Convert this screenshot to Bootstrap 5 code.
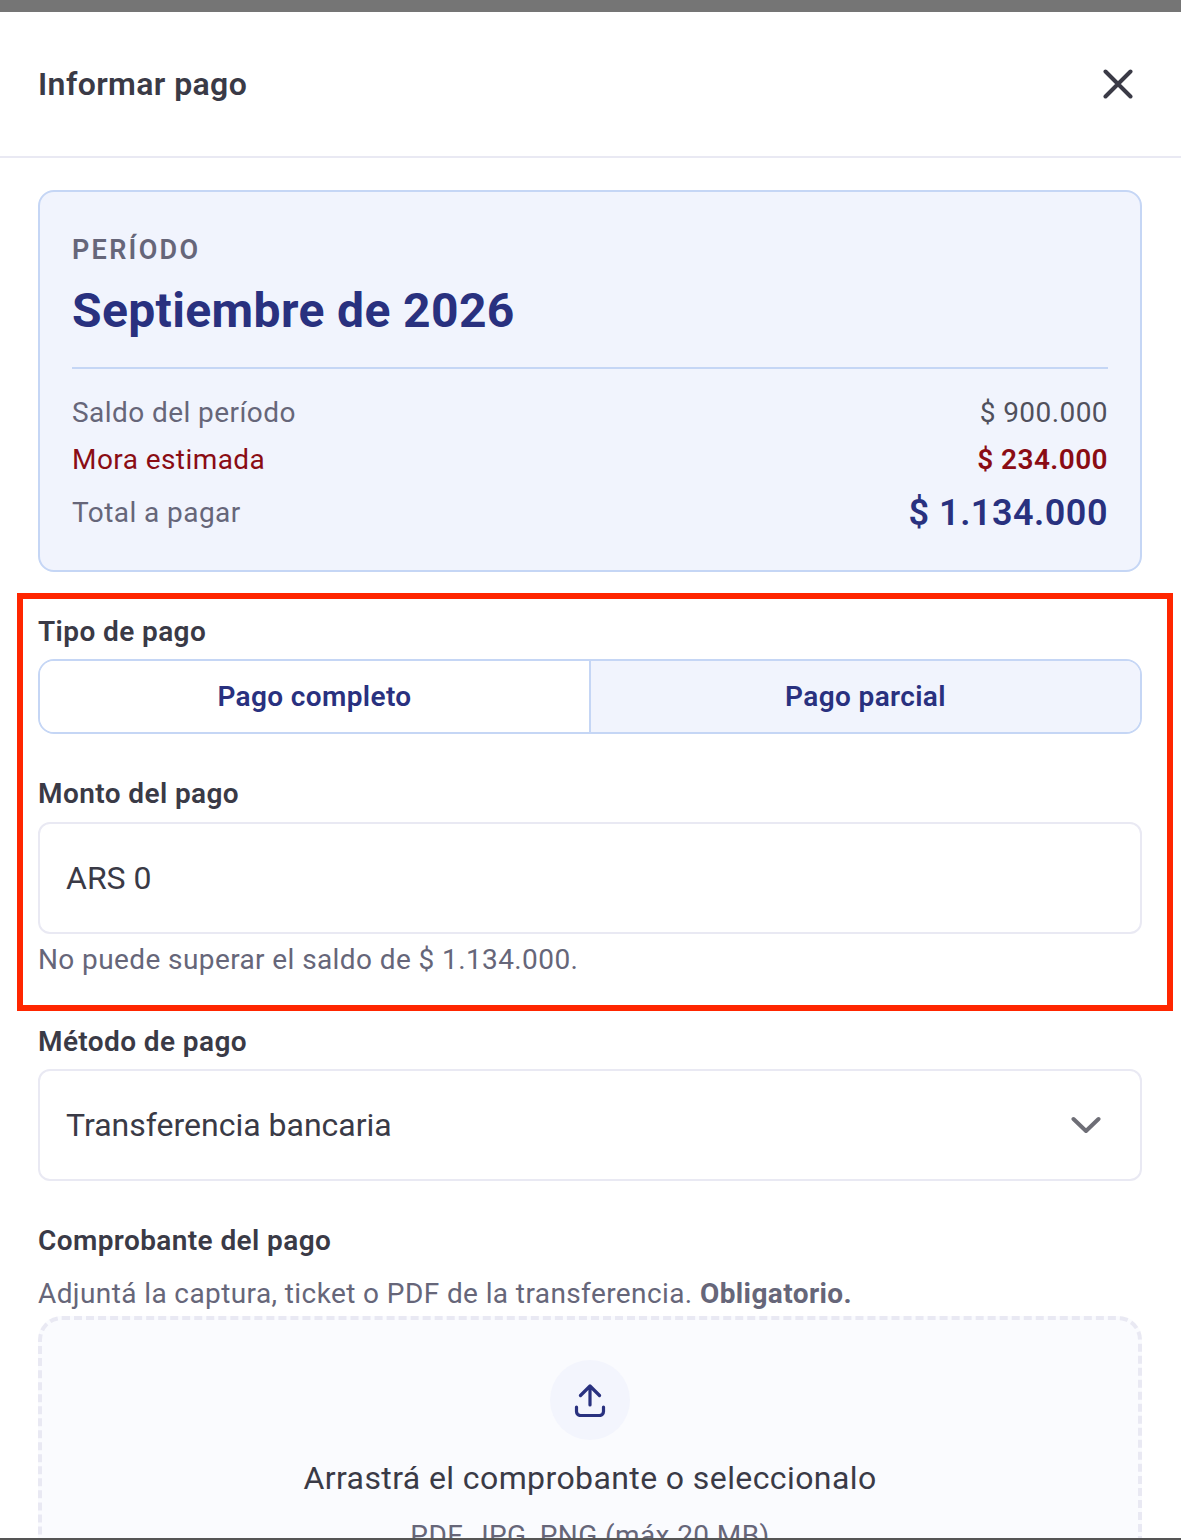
<!DOCTYPE html>
<html lang="es">
<head>
<meta charset="utf-8">
<title>Informar pago</title>
<link href="https://cdn.jsdelivr.net/npm/bootstrap@5.3.0/dist/css/bootstrap.min.css" rel="stylesheet">
<style>
html,body{height:1540px;overflow:hidden;background:#fff}
body{font-family:Roboto,"Liberation Sans",sans-serif;color:#3a3a46;position:relative}
.top-strip{height:12px;background:#757575}
.bottom-strip{position:absolute;left:0;right:0;top:1538px;height:2px;background:#555}
.sheet-head{height:146px;padding:0 38px;border-bottom:2px solid #e9e9f3}
.sheet-title{font-size:32px;font-weight:600;line-height:40px;margin:0;color:#3a3a46;letter-spacing:.4px}
.close-x{width:48px;height:48px;margin-right:1px;padding:0;border:0;background:none}
.sheet-body{padding:32px 39px 0 38px}
.period-box{height:382px;background:#f1f4fd;border:2px solid #c5d6f5;border-radius:16px;padding:32px}
.period-label{font-size:27px;font-weight:600;letter-spacing:2.3px;line-height:52px;color:#666679;height:52px}
.period-name{font-size:48px;font-weight:700;line-height:69px;color:#29317f;margin:0;letter-spacing:.38px}
.period-rule{border-top:2px solid #c5d6f5;margin:22px 0 21px}
.line-row{font-size:28px;line-height:46px;letter-spacing:.43px;color:#666679}
.line-row .amount{color:#50505c}
.line-row.first-row{margin-bottom:1px}
.line-row.mora{color:#8a0c14}
.line-row.mora .amount{color:#8a0c14;font-weight:600}
.line-row.total{line-height:60px}
.line-row.total .amount{font-size:36px;font-weight:600;color:#29317f;letter-spacing:.5px}
.field-label{font-size:28px;font-weight:600;line-height:36px;color:#3a3a46;display:block;margin:0;letter-spacing:.4px}
.type-toggle{height:75px;margin-top:9px;border:2px solid #c5d6f5;border-radius:16px;overflow:hidden}
.type-toggle button{flex:1 1 0;border:0;background:#fff;font-size:28px;font-weight:600;color:#29317f;padding:0;letter-spacing:.37px}
.type-toggle button+button{background:#f1f4fd;border-left:2px solid #c5d6f5}
.field-shell{height:112px;border:2px solid #e9e9f3;border-radius:12px;padding:0 26px;font-size:32px;color:#3a3a46;background:#fff}
.field-shell svg{margin-right:13px}
.hint-text{font-size:28px;line-height:36px;color:#666679;letter-spacing:.4px}
.hint-text strong{font-weight:700}
.drop-zone{height:300px;border:4px dashed #e9e9f3;border-radius:24px;background:#fafbfe;padding-top:40px}
.upload-disc{width:80px;height:80px;border-radius:50%;background:#f3f5fd}
.drop-main{font-size:32px;line-height:40px;letter-spacing:.4px;color:#3a3a46;margin-top:18px}
.drop-sub{font-size:28px;line-height:36px;color:#666679;letter-spacing:.4px;margin-top:20px}
.red-frame{position:absolute;left:17px;top:593px;width:1156px;height:418px;border:6px solid #ff2600;pointer-events:none}
.mt-type{margin-top:42px}.mt-amount{margin-top:42px}.mt-shell{margin-top:10px}.mt-hint{margin-top:8px}
.mt-method{margin-top:46px}.mt-shell-tight{margin-top:9px}.mt-proof{margin-top:42px}.mt-proofhint{margin-top:17px;margin-bottom:4px}
</style>
</head>
<body>
<div class="top-strip"></div>
<header class="sheet-head d-flex align-items-center justify-content-between">
  <h1 class="sheet-title">Informar pago</h1>
  <button class="close-x d-flex align-items-center justify-content-center" aria-label="Cerrar">
    <svg width="30" height="30" viewBox="0 0 30 30" fill="none" stroke="#3a3a46" stroke-width="4" stroke-linecap="round"><path d="M2.500 2.500 27.500 27.500M27.500 2.500 2.500 27.500"/></svg>
  </button>
</header>
<main class="sheet-body">
  <section class="period-box">
    <div class="period-label">PERÍODO</div>
    <h2 class="period-name">Septiembre de 2026</h2>
    <div class="period-rule"></div>
    <div class="line-row first-row d-flex justify-content-between"><span>Saldo del período</span><span class="amount">$ 900.000</span></div>
    <div class="line-row mora d-flex justify-content-between"><span>Mora estimada</span><span class="amount">$ 234.000</span></div>
    <div class="line-row total d-flex justify-content-between align-items-center"><span>Total a pagar</span><span class="amount">$ 1.134.000</span></div>
  </section>
  <label class="field-label mt-type">Tipo de pago</label>
  <div class="type-toggle d-flex"><button type="button">Pago completo</button><button type="button">Pago parcial</button></div>
  <label class="field-label mt-amount">Monto del pago</label>
  <div class="field-shell d-flex align-items-center mt-shell">ARS 0</div>
  <div class="hint-text mt-hint">No puede superar el saldo de $ 1.134.000.</div>
  <label class="field-label mt-method">Método de pago</label>
  <div class="field-shell d-flex align-items-center justify-content-between mt-shell-tight">
    <span>Transferencia bancaria</span>
    <svg width="30" height="18" viewBox="0 0 30 18" fill="none" stroke="#6e6e76" stroke-width="4" stroke-linecap="round" stroke-linejoin="round"><path d="M2.500 3 15 15 27.500 3"/></svg>
  </div>
  <label class="field-label mt-proof">Comprobante del pago</label>
  <div class="hint-text mt-proofhint">Adjuntá la captura, ticket o PDF de la transferencia. <strong>Obligatorio.</strong></div>
  <div class="drop-zone text-center">
    <div class="upload-disc d-flex align-items-center justify-content-center mx-auto">
      <svg width="32" height="34" viewBox="0 0 32 34" fill="none" stroke="#29317f" stroke-width="3.200" stroke-linecap="round" stroke-linejoin="round"><path d="M16 22V3.500M6.500 12.500 16 3l9.500 9.500M2.500 24v4.500a4 4 0 0 0 4 4h19a4 4 0 0 0 4-4V24"/></svg>
    </div>
    <div class="drop-main">Arrastrá el comprobante o seleccionalo</div>
    <div class="drop-sub">PDF, JPG, PNG (máx 20 MB)</div>
  </div>
</main>
<div class="bottom-strip"></div>
<div class="red-frame"></div>
<script src="https://cdn.jsdelivr.net/npm/bootstrap@5.3.0/dist/js/bootstrap.bundle.min.js"></script>
</body>
</html>
